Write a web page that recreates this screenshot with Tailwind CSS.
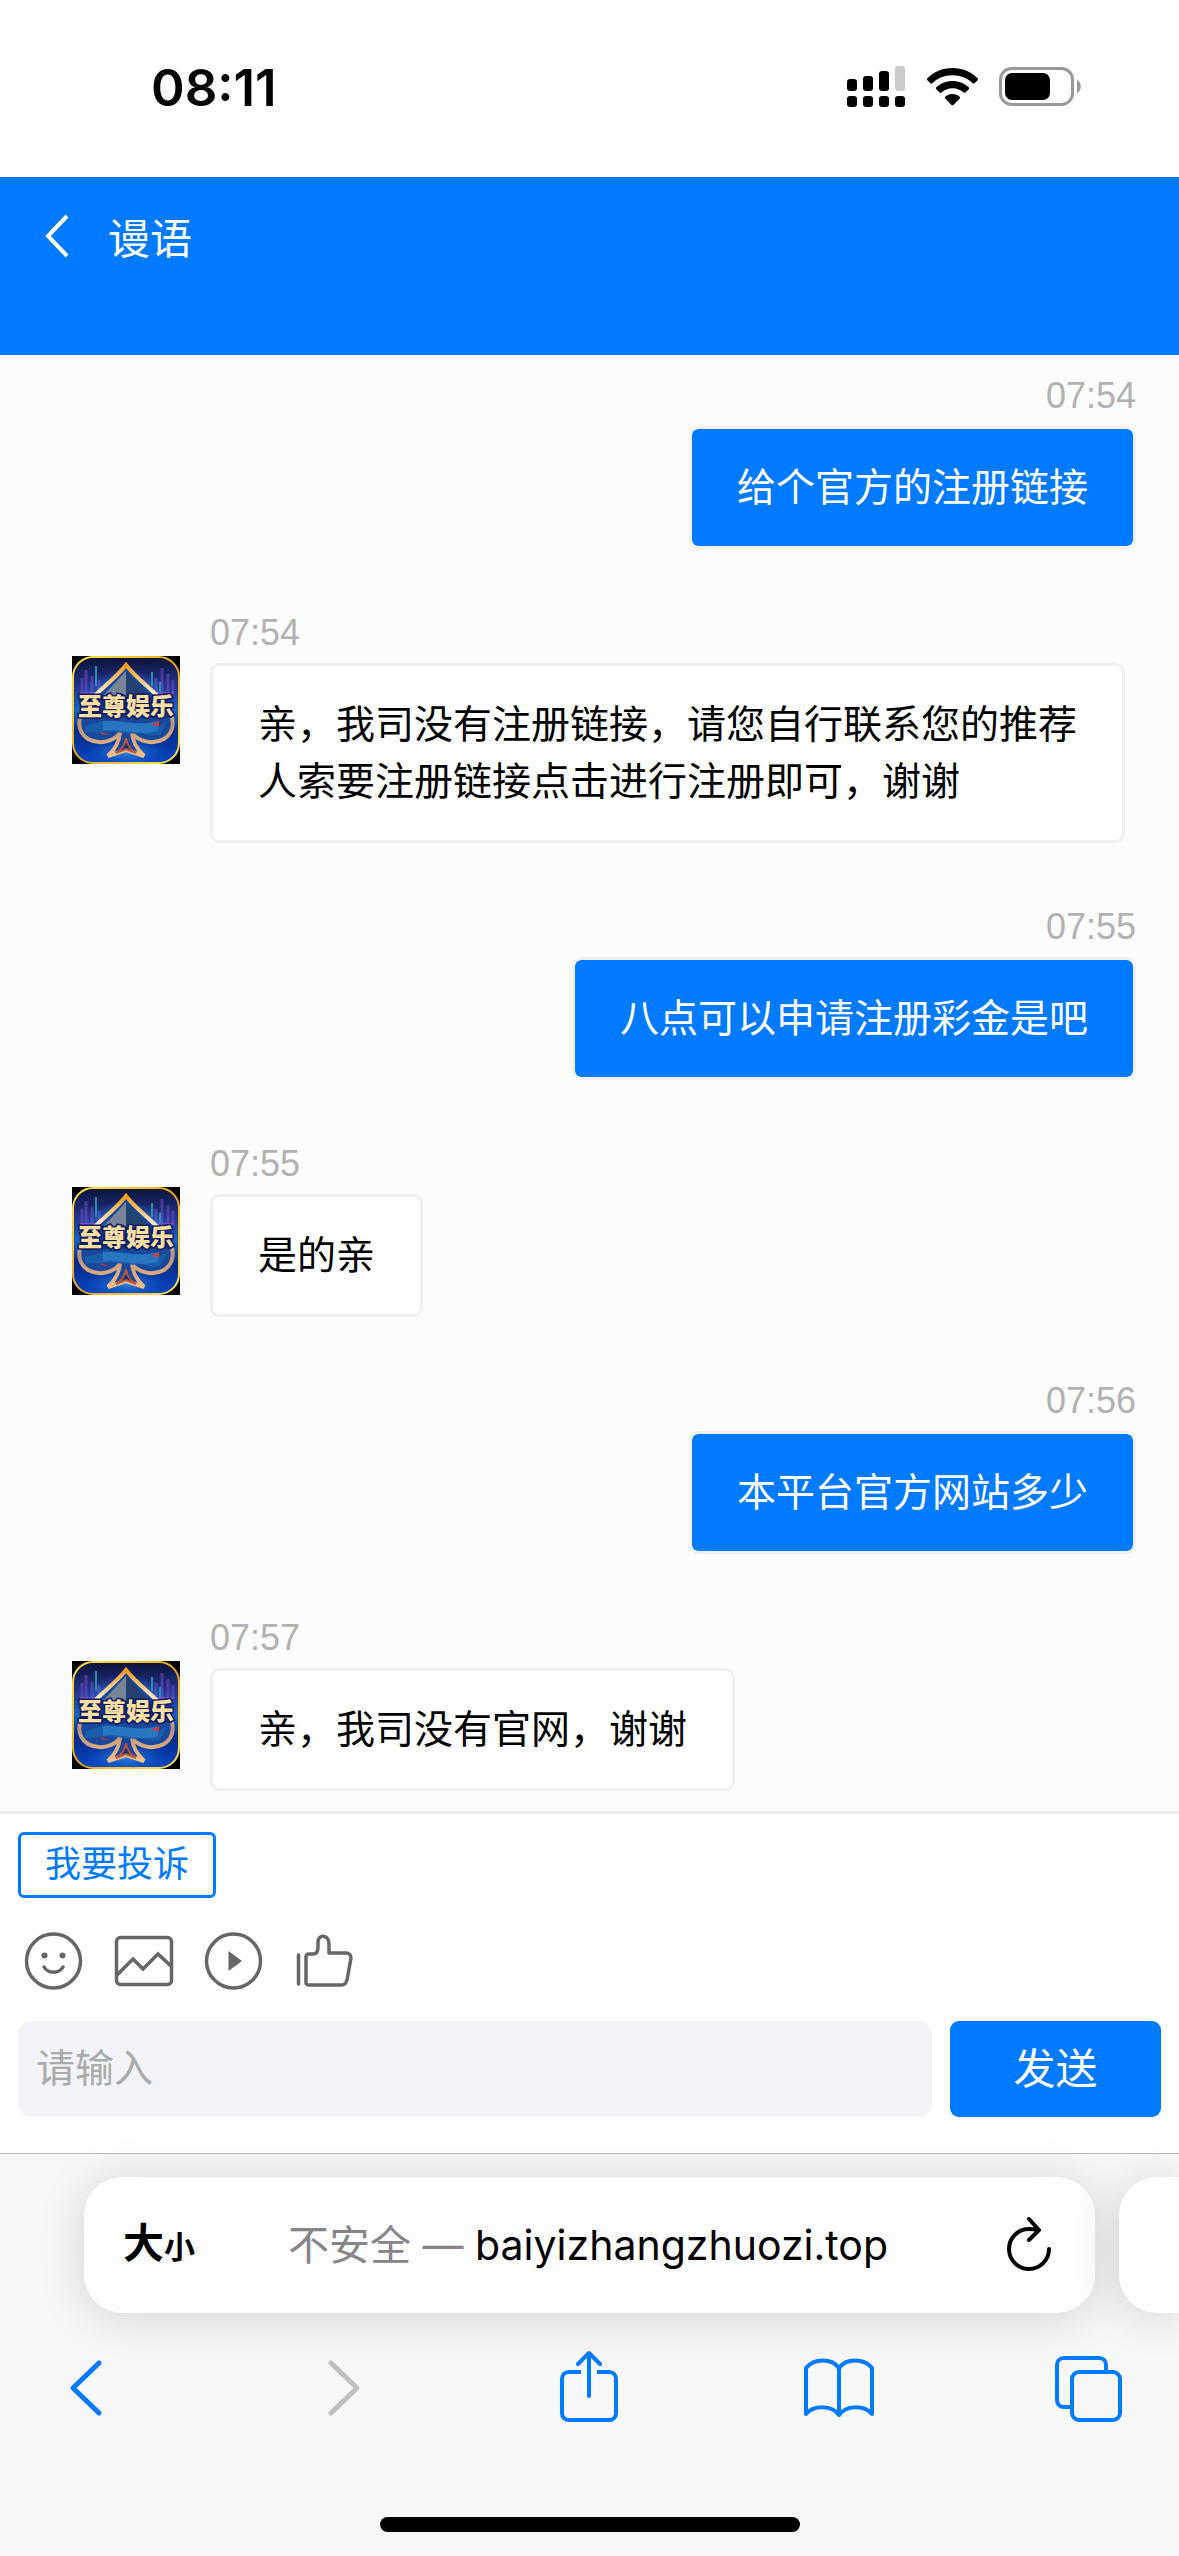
<!DOCTYPE html>
<html lang="zh-CN">
<head>
    <meta charset="UTF-8">
    <meta name="viewport" content="width=device-width, initial-scale=1.0">
    <title>谩语</title>
    <script src="https://cdn.jsdelivr.net/npm/@tailwindcss/browser@4"></script>
</head>
<body class="flex min-h-screen flex-col overflow-x-hidden bg-white font-['Liberation_Sans','Noto_Sans_CJK_SC',sans-serif] text-black">
    <!-- Status bar -->
    <div class="flex h-[177px] items-start justify-between pt-[57px] pr-[97px] pl-[151px]">
        <div class="font-['Inter',sans-serif] text-[51px] leading-[62px] font-semibold">08:11</div>
        <div class="flex items-center gap-[21px] pt-[9px]">
            <svg class="h-[42px] w-[59px]" viewBox="0 0 59 42">
                <rect x="0" y="13" width="10" height="12" rx="3"/>
                <rect x="16" y="10" width="10" height="15" rx="3"/>
                <rect x="32" y="5" width="10" height="20" rx="3"/>
                <rect x="48" y="0" width="10" height="25" rx="3" fill="#ccc"/>
                <rect x="0" y="30" width="10" height="11" rx="3"/>
                <rect x="16" y="30" width="10" height="11" rx="3"/>
                <rect x="32" y="30" width="10" height="11" rx="3"/>
                <rect x="48" y="30" width="10" height="11" rx="3"/>
            </svg>
            <svg class="h-[38px] w-[51px]" viewBox="0 0 51 38">
                <path d="M25.500 0C35.500 0 44.500 4 50.600 10.200c.6.600.6 1.400 0 2l-3 3c-.5.500-1.300.5-1.900 0C40.500 10.300 33.500 7.300 25.500 7.300S10.500 10.300 5.300 15.200c-.6.500-1.400.5-1.900 0l-3-3c-.6-.6-.6-1.400 0-2C6.500 4 15.500 0 25.500 0z"/>
                <path d="M25.500 13c6.300 0 12 2.400 16.200 6.300.6.600.6 1.400 0 2l-3.200 3.200c-.5.500-1.200.5-1.800 0-3-2.600-6.900-4.200-11.200-4.200s-8.200 1.600-11.200 4.200c-.6.500-1.300.5-1.800 0l-3.200-3.200c-.6-.6-.6-1.400 0-2C13.500 15.400 19.200 13 25.500 13z"/>
                <path d="M25.500 26c2.800 0 5.300 1 7.200 2.700.6.500.6 1.300 0 1.900l-6.200 6.300c-.6.600-1.400.6-2 0l-6.200-6.300c-.6-.6-.6-1.400 0-1.900 1.900-1.700 4.400-2.700 7.200-2.700z"/>
            </svg>
            <svg class="h-[40px] w-[83px]" viewBox="0 0 83 40">
                <rect x="1.500" y="1.500" width="72" height="36" rx="11" fill="none" stroke="#999" stroke-width="3"/>
                <rect x="6" y="6" width="45" height="27" rx="7"/>
                <path d="M78 13c5 2 5 11 0 13z" fill="#999"/>
            </svg>
        </div>
    </div>

    <!-- Chat title -->
    <header class="flex h-[178px] items-start bg-[#007aff] px-[45px] pt-[30px] text-white">
        <button type="button" aria-label="返回" class="py-[6px]">
            <svg class="h-[46px] w-[24px]" viewBox="0 0 24 46" fill="none" stroke="currentColor" stroke-width="4">
                <path d="M22 3 3 23 22 43"/>
            </svg>
        </button>
        <h1 class="ml-[39px] text-[42px] leading-[66px] font-normal">谩语</h1>
    </header>

    <!-- Messages -->
    <main class="flex flex-1 flex-col gap-[54px] bg-[#fcfcfc] pt-[11px] pr-[43px] pb-[20px] pl-[72px] text-[39px] leading-[57px]">
        <div class="flex flex-col items-end">
            <time class="text-[36px] leading-[60px] text-[#b2b2b2]">07:54</time>
            <p class="rounded-[9px] border-3 border-[#f1f1f1] bg-[#007aff] bg-clip-padding px-[45px] py-[30px] text-white">给个官方的注册链接</p>
        </div>

        <div class="flex gap-[30px]">
            <!-- The other avatars reuse this drawing -->
            <svg class="mt-[53px] size-[108px] shrink-0" viewBox="0 0 108 108" role="img" aria-label="客服头像">
                <defs>
                    <linearGradient id="sky" x1="0" y1="0" x2="0" y2="1">
                        <stop offset="0" stop-color="#0a1338"/>
                        <stop offset=".28" stop-color="#23328c"/>
                        <stop offset=".5" stop-color="#1763c4"/>
                        <stop offset=".7" stop-color="#062a86"/>
                        <stop offset="1" stop-color="#0747c4"/>
                    </linearGradient>
                    <linearGradient id="gold" x1="0" y1="0" x2="0" y2="1">
                        <stop offset="0" stop-color="#f59c1a"/>
                        <stop offset=".3" stop-color="#ffe9c4"/>
                        <stop offset=".65" stop-color="#b98f78"/>
                        <stop offset="1" stop-color="#f3c08a"/>
                    </linearGradient>
                    <linearGradient id="frame" x1="0" y1="0" x2="1" y2="1">
                        <stop offset="0" stop-color="#ffe44d"/>
                        <stop offset=".5" stop-color="#e8a818"/>
                        <stop offset="1" stop-color="#ffe25a"/>
                    </linearGradient>
                    <radialGradient id="glow">
                        <stop offset="0" stop-color="#5ec8ff" stop-opacity=".9"/>
                        <stop offset="1" stop-color="#1e78e6" stop-opacity="0"/>
                    </radialGradient>
                </defs>
                <g id="avatar">
                    <rect width="108" height="108" fill="#000"/>
                    <rect x="1" y="1" width="106" height="106" rx="20" fill="url(#sky)"/>
                    <path d="M10 22v16M14 14v24M20 20v18M27 24v14M84 22v16M90 12v26M96 18v20M101 24v14" stroke="#7a52c8" stroke-width="3" opacity=".5"/>
                    <path d="M24 10v20M80 16v14M88 26v10" stroke="#2ba9b8" stroke-width="2" opacity=".8"/>
                    <path d="M8 37h20M82 37h20" stroke="#b04cc8" stroke-width="2" opacity=".6"/>
                    <ellipse cx="54" cy="38" rx="44" ry="24" fill="url(#glow)"/>
                    <ellipse cx="54" cy="96" rx="40" ry="14" fill="url(#glow)" opacity=".6"/>
                    <path d="M54 9C66 24 80 33 93 48c11 13 10 28-1 35-11 6-25 3-32-6 1 9 4 15 12 23l-18-6-18 6c8-8 11-14 12-23-7 9-21 12-32 6-11-7-12-22-1-35C28 33 42 24 54 9z" fill="#17489c" stroke="url(#gold)" stroke-width="4"/>
                    <path d="M54 15 29 42h25z" fill="#77859a"/>
                    <path d="M54 15l25 27H54z" fill="#24426f"/>
                    <path d="M54 82c-1 8-5 12-10 15l10-4 10 4c-5-3-9-7-10-15z" fill="#1b2d70" stroke="#b4573e" stroke-width="2"/>
                    <path d="M8 40h92v22H8z" fill="#0a2f86" opacity=".75"/>
                    <path d="M13 70l18-5v11c14-5 33 4 48-1l16-10-7 14c-8 1-13 1-18-2-13 3-25-3-39-1l-18 1z" fill="#195ca9"/>
                    <path d="M31 65c17-2 33 6 55 0v10c-22 6-38-3-55 0z" fill="#2876bf"/>
                    <path d="M29 76l8 3-8-1zM79 69l8-4v5z" fill="#d63a35"/>
                    <text x="54" y="59" text-anchor="middle" font-family="'Noto Sans CJK SC',sans-serif" font-size="24" font-weight="900" fill="#ffdfa0" stroke="#0b1c60" stroke-width="3" paint-order="stroke">至尊娱乐</text>
                    <rect x="1" y="1" width="106" height="106" rx="20" fill="none" stroke="url(#frame)" stroke-width="2"/>
                </g>
            </svg>
            <div class="flex flex-col items-start">
                <time class="text-[36px] leading-[60px] text-[#b2b2b2]">07:54</time>
                <p class="max-w-[915px] rounded-[9px] border-3 border-[#f1f1f1] bg-white px-[45px] py-[30px]">亲，我司没有注册链接，请您自行联系您的推荐人索要注册链接点击进行注册即可，谢谢</p>
            </div>
        </div>

        <div class="flex flex-col items-end">
            <time class="text-[36px] leading-[60px] text-[#b2b2b2]">07:55</time>
            <p class="rounded-[9px] border-3 border-[#f1f1f1] bg-[#007aff] bg-clip-padding px-[45px] py-[30px] text-white">八点可以申请注册彩金是吧</p>
        </div>

        <div class="flex gap-[30px]">
            <svg class="mt-[53px] size-[108px] shrink-0" viewBox="0 0 108 108" role="img" aria-label="客服头像"><use href="#avatar"/></svg>
            <div class="flex flex-col items-start">
                <time class="text-[36px] leading-[60px] text-[#b2b2b2]">07:55</time>
                <p class="max-w-[915px] rounded-[9px] border-3 border-[#f1f1f1] bg-white px-[45px] py-[30px]">是的亲</p>
            </div>
        </div>

        <div class="flex flex-col items-end">
            <time class="text-[36px] leading-[60px] text-[#b2b2b2]">07:56</time>
            <p class="rounded-[9px] border-3 border-[#f1f1f1] bg-[#007aff] bg-clip-padding px-[45px] py-[30px] text-white">本平台官方网站多少</p>
        </div>

        <div class="flex gap-[30px]">
            <svg class="mt-[53px] size-[108px] shrink-0" viewBox="0 0 108 108" role="img" aria-label="客服头像"><use href="#avatar"/></svg>
            <div class="flex flex-col items-start">
                <time class="text-[36px] leading-[60px] text-[#b2b2b2]">07:57</time>
                <p class="max-w-[915px] rounded-[9px] border-3 border-[#f1f1f1] bg-white px-[45px] py-[30px]">亲，我司没有官网，谢谢</p>
            </div>
        </div>
    </main>

    <!-- Composer -->
    <section class="border-t-3 border-[#ececec] bg-white px-[18px] pt-[18px] pb-[36px]">
        <button type="button" class="block rounded-[6px] border-3 border-[#007aff] px-[24px] text-[36px] leading-[60px] text-[#007aff]">我要投诉</button>

        <div class="mt-[33px] flex gap-[30px] pl-[6px] text-[#666]">
            <button type="button" aria-label="表情">
                <svg class="size-[60px]" viewBox="0 0 60 60" fill="none" stroke="currentColor" stroke-width="3.500">
                    <circle cx="29.500" cy="30" r="27"/>
                    <circle cx="20.500" cy="24.500" r="3" fill="currentColor" stroke="none"/>
                    <circle cx="38.500" cy="24.500" r="3" fill="currentColor" stroke="none"/>
                    <path d="M20 36c4 7 15 7 19 0" stroke-linecap="round"/>
                </svg>
            </button>
            <button type="button" aria-label="图片">
                <svg class="size-[60px]" viewBox="0 0 60 60" fill="none" stroke="currentColor" stroke-width="3.500">
                    <rect x="2.500" y="6.500" width="55" height="47" rx="4"/>
                    <path d="M3 44l16-16 10 10 15-15 14 13"/>
                </svg>
            </button>
            <button type="button" aria-label="视频">
                <svg class="size-[60px]" viewBox="0 0 60 60" fill="none" stroke="currentColor" stroke-width="3.500">
                    <circle cx="29.500" cy="30" r="27"/>
                    <path d="M24.500 20v20L38 30z" fill="currentColor" stroke="none"/>
                </svg>
            </button>
            <button type="button" aria-label="评价">
                <svg class="size-[60px]" viewBox="0 0 60 60" fill="none" stroke="currentColor" stroke-width="3.500" stroke-linejoin="round">
                    <path d="M4.500 24v29" stroke-linecap="round"/>
                    <path d="M12 26c0-2 1-3 3-3h4c4 0 5-3 5-7V11c0-8 11-8 11 2v9h17c3 0 5 2 5 5l-4 22c-1 3-2 5-5 5H14c-1 0-2-1-2-2z"/>
                </svg>
            </button>
        </div>

        <form class="mt-[30px] flex gap-[18px]">
            <input type="text" aria-label="消息" placeholder="请输入" class="h-[96px] min-w-0 flex-1 rounded-[14px] bg-[#f2f3f7] px-[18px] text-[39px] placeholder:text-[#aaa]">
            <button type="button" class="h-[96px] w-[211px] rounded-[9px] bg-[#007aff] text-[42px] text-white">发送</button>
        </form>
    </section>

    <!-- Browser bar -->
    <footer class="border-t border-[#b9b9bb] bg-[#f7f7f7] pt-[23px] pb-[24px]">
        <div class="flex gap-[24px] pl-[84px]">
            <div class="flex h-[136px] flex-1 items-center rounded-[38px] bg-[#fdfdfd] pr-[42px] pl-[39px] font-['Inter','Noto_Sans_CJK_SC',sans-serif] shadow-[0_4px_48px_rgb(0_0_0/0.14)]">
                <button type="button" class="flex-1 text-left text-[41px] leading-[60px] font-bold">大<span class="text-[31px]">小</span></button>
                <div class="text-[41px] leading-[60px]"><span class="text-[#85858a]">不安全 — </span>baiyizhangzhuozi.top</div>
                <button type="button" aria-label="重新载入" class="flex flex-1 justify-end">
                    <svg class="h-[60px] w-[48px]" viewBox="0 0 48 60" fill="none" stroke="currentColor" stroke-width="4" stroke-linecap="round" stroke-linejoin="round">
                        <path d="M44 34A20 20 0 1 1 24 14q5 0 9 1M24 4l10 11-10 10"/>
                    </svg>
                </button>
            </div>
            <div class="h-[136px] w-[60px] rounded-l-[38px] bg-[#fdfdfd] shadow-[0_4px_48px_rgb(0_0_0/0.14)]"></div>
        </div>

        <nav class="mt-[37px] flex justify-between pr-[54px] pl-[51px] text-[#007aff]">
            <button type="button" aria-label="后退">
                <svg class="h-[74px] w-[72px]" viewBox="0 0 72 74" fill="none" stroke="currentColor" stroke-width="5" stroke-linecap="round" stroke-linejoin="round">
                    <path d="M48 13 22 38l26 25"/>
                </svg>
            </button>
            <button type="button" aria-label="前进" class="text-[#bfbfbf]">
                <svg class="h-[74px] w-[72px]" viewBox="0 0 72 74" fill="none" stroke="currentColor" stroke-width="5" stroke-linecap="round" stroke-linejoin="round">
                    <path d="M29 13l26 25-26 25"/>
                </svg>
            </button>
            <button type="button" aria-label="分享">
                <svg class="h-[74px] w-[72px]" viewBox="0 0 72 74" fill="none" stroke="currentColor" stroke-width="4" stroke-linejoin="round">
                    <path d="M29 22H17c-4 0-7 3-7 7v34c0 4 3 7 7 7h40c4 0 7-3 7-7V29c0-4-3-7-7-7H45"/>
                    <path d="M37 46V3M26 14 37 3l11 11" stroke-linecap="round"/>
                </svg>
            </button>
            <button type="button" aria-label="书签">
                <svg class="h-[74px] w-[72px]" viewBox="0 0 72 74" fill="none" stroke="currentColor" stroke-width="4" stroke-linecap="round" stroke-linejoin="round">
                    <path d="M36 18v47M36 18C29 8 11 8 3 18v46c8-9 26-9 33 1 7-10 25-10 33-1V18c-8-10-26-10-33 0z"/>
                </svg>
            </button>
            <button type="button" aria-label="标签页">
                <svg class="h-[74px] w-[72px]" viewBox="0 0 72 74" fill="none" stroke="currentColor" stroke-width="4">
                    <path d="M53 21v-6c0-4-3-7-7-7H11c-4 0-7 3-7 7v35c0 4 3 7 7 7h7"/>
                    <rect x="19" y="22" width="48" height="48" rx="7"/>
                </svg>
            </button>
        </nav>

        <div class="mx-auto mt-[93px] h-[15px] w-[420px] rounded-full bg-black"></div>
    </footer>
</body>
</html>
